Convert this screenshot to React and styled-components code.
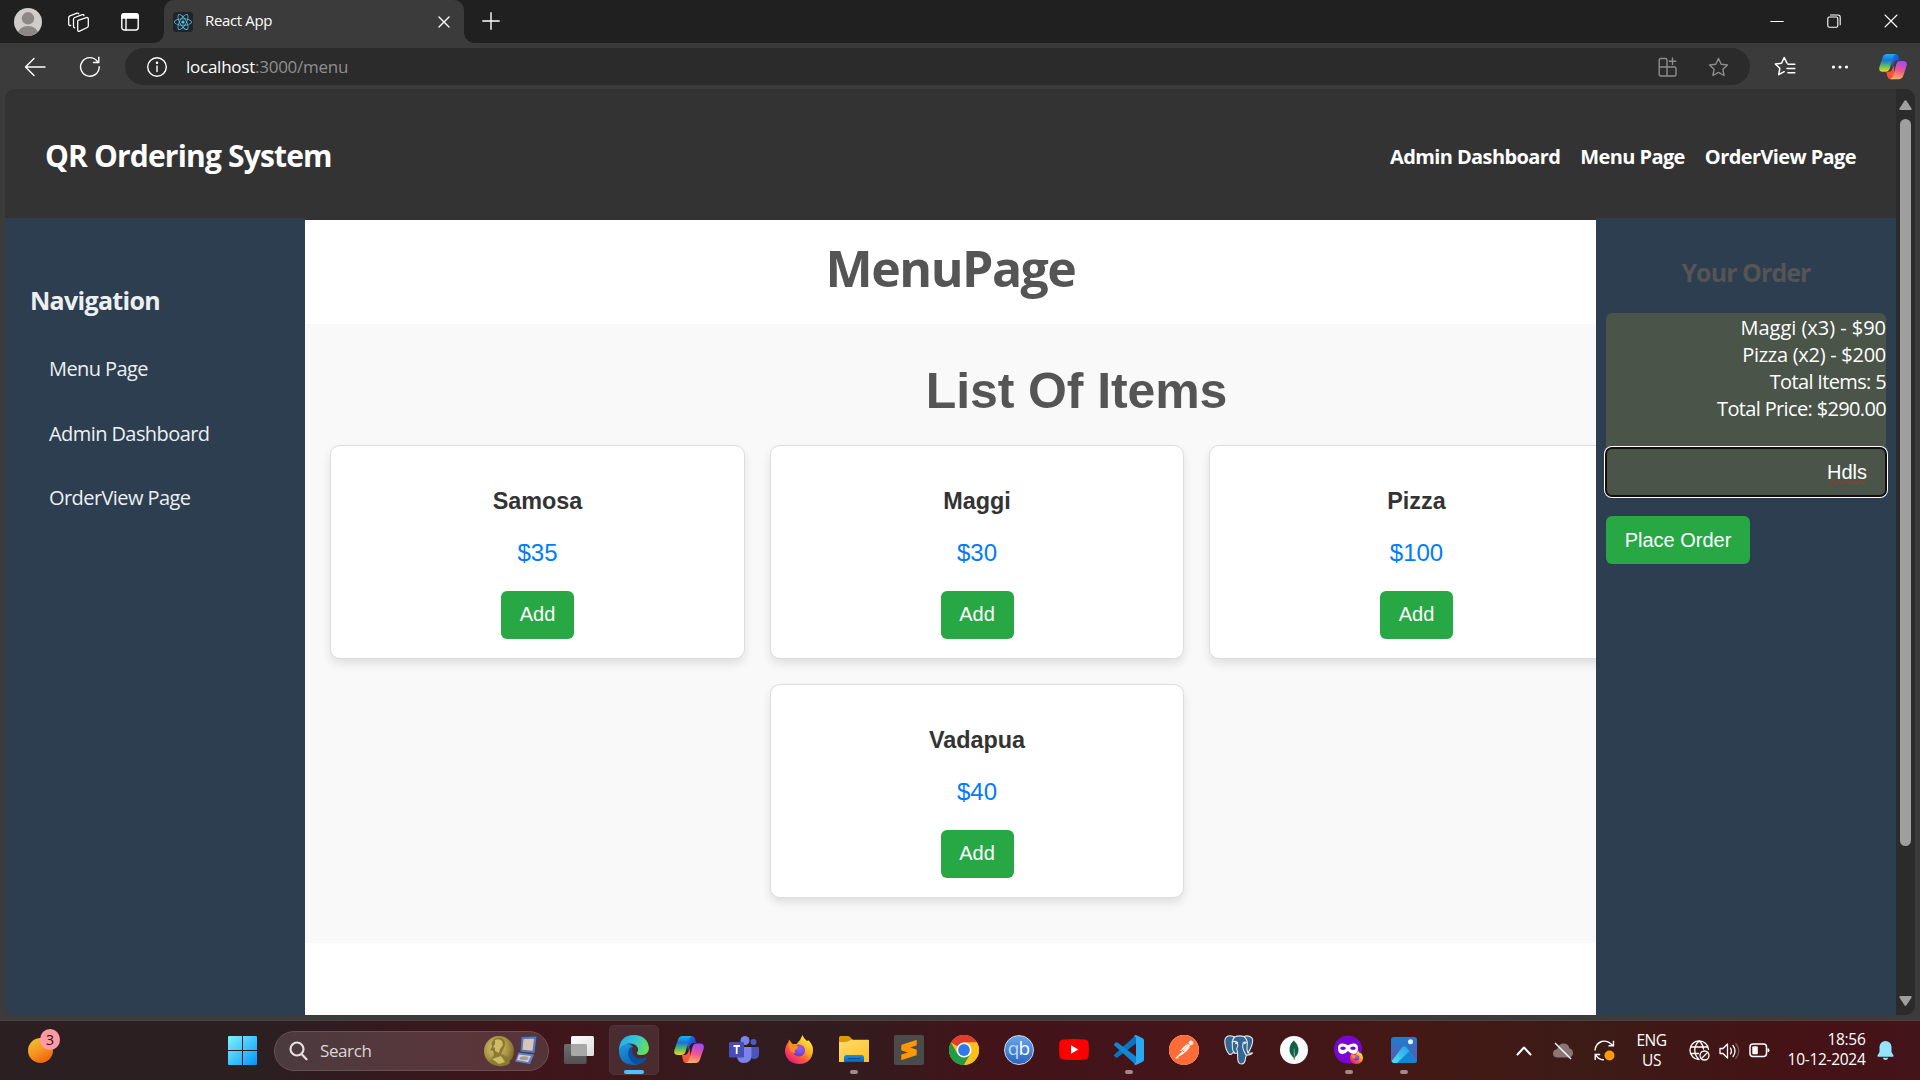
import React from "react";
import styled, { createGlobalStyle, css } from "styled-components";
import { FaReact } from "react-icons/fa";
import { SiMongodb, SiSublimetext, SiPostman } from "react-icons/si";

const SEGOE = '"Open Sans", "Noto Sans", sans-serif';
const ARIAL = '"Liberation Sans", Arial, sans-serif';

const GlobalStyle = createGlobalStyle`
  * { box-sizing: border-box; }
  body { margin: 0; background: #3b3b3b; overflow: hidden; }
  h1, h2, h3, p, ul { margin: 0; padding: 0; }
  svg { display: block; flex: none; }
`;

const Screen = styled.div`
  width: 1920px;
  height: 1080px;
  display: flex;
  flex-direction: column;
  overflow: hidden;
  background: #3b3b3b;
  font-family: ${SEGOE};
`;

/* ---------- Browser chrome ---------- */

const TabStrip = styled.div`
  height: 43px;
  display: flex;
  align-items: center;
  background: #202020;
  color: #fff;
`;

const TabStripTools = styled.div`
  width: 164px;
  display: flex;
  align-items: center;
  justify-content: space-between;
  padding: 0 25px 0 14px;
`;

const corner = css`
  content: "";
  position: absolute;
  bottom: 0;
  width: 10px;
  height: 10px;
`;

const Tab = styled.div`
  position: relative;
  width: 300px;
  height: 43px;
  display: flex;
  align-items: center;
  padding: 0 14px 0 9px;
  background: #3b3b3b;
  border-radius: 10px 10px 0 0;
  &::before {
    ${corner}
    left: -10px;
    background: radial-gradient(circle at 0 0, transparent 9.5px, #3b3b3b 10px);
  }
  &::after {
    ${corner}
    right: -10px;
    background: radial-gradient(circle at 100% 0, transparent 9.5px, #3b3b3b 10px);
  }
`;

const Favicon = styled.span`
  width: 20px;
  height: 20px;
  display: grid;
  place-items: center;
  border-radius: 3px;
  background: #20232a;
  color: #58c4dc;
  font-size: 18px;
`;

const TabTitle = styled.span`
  flex: 1;
  margin-left: 12px;
  padding-bottom: 3px;
  font-size: 15px;
  letter-spacing: -0.35px;
  line-height: 20px;
`;

const NewTab = styled.div`
  flex: 1;
  padding: 0 0 1px 18px;
`;

const WindowButtons = styled.div`
  display: flex;
  gap: 43px;
  padding: 0 22px 1px 0;
`;

const Toolbar = styled.div`
  height: 46px;
  display: flex;
  align-items: center;
  padding: 1px 13px 0 24px;
  background: #3b3b3b;
`;

const NavButtons = styled.div`
  width: 101px;
  display: flex;
  align-items: center;
  gap: 33px;
`;

const AddressBar = styled.div`
  width: 1625px;
  height: 37px;
  display: flex;
  align-items: center;
  padding: 0 21px 0 21px;
  border-radius: 19px;
  background: #2b2b2b;
`;

const Url = styled.span`
  flex: 1;
  margin-left: 18px;
  font-size: 17px;
  line-height: 24px;
  letter-spacing: -0.25px;
  color: #8f8f8f;
  b { font-weight: 400; color: #fff; }
`;

const AddressActions = styled.div`
  display: flex;
  gap: 30px;
`;

const ToolbarActions = styled.div`
  flex: 1;
  display: flex;
  align-items: center;
  padding-left: 24px;
`;

const MenuDots = styled.div`
  flex: 1;
  padding-left: 35px;
`;

/* ---------- Web page ---------- */

const Viewport = styled.div`
  height: 926px;
  margin: 0 5px;
  display: flex;
  overflow: hidden;
  border-radius: 10px;
  background: #333;
`;

const Page = styled.div`
  width: 1891px;
  display: flex;
  flex-direction: column;
`;

const Header = styled.header`
  height: 129px;
  flex: none;
  display: flex;
  align-items: center;
  justify-content: space-between;
  padding: 5px 40px 0 40px;
  background: #333;
  color: #fff;
`;

const Brand = styled.h1`
  font-size: 30px;
  line-height: 40px;
  font-weight: 700;
  letter-spacing: -0.83px;
`;

const HeaderLinks = styled.nav`
  display: flex;
  gap: 20px;
`;

const HeaderLink = styled.a`
  font-size: 20px;
  line-height: 27px;
  font-weight: 700;
  letter-spacing: -0.6px;
  color: #fff;
`;

const Body = styled.div`
  flex: 1;
  min-height: 0;
  display: flex;
`;

const Sidebar = styled.aside`
  width: 300px;
  flex: none;
  padding-top: 65px;
  background: #2c3e50;
  color: #ecf0f1;
`;

const SidebarTitle = styled.h2`
  margin: 0 0 20px 25px;
  font-size: 25px;
  line-height: 34px;
  letter-spacing: -0.7px;
`;

const SidebarLink = styled.a`
  display: block;
  padding-left: 44px;
  font-size: 20px;
  line-height: 64.5px;
  letter-spacing: -0.58px;
`;

const Main = styled.main`
  width: 1291px;
  flex: none;
  overflow: hidden;
  border-top: 2px solid #333;
  background: #fff;
  color: #555;
`;

const PageTitle = styled.h1`
  height: 104px;
  padding-top: 14px;
  text-align: center;
  font-size: 50px;
  line-height: 68px;
  letter-spacing: -1.5px;
`;

const ItemsSection = styled.section`
  width: 1543px;
  height: 619px;
  padding-top: 39px;
  background: #f9f9f9;
  font-family: ${ARIAL};
`;

const ItemsTitle = styled.h2`
  text-align: center;
  font-size: 50px;
  line-height: 57px;
  letter-spacing: -0.1px;
`;

const CardGrid = styled.div`
  width: 1344px;
  margin-top: 25px;
  display: flex;
  flex-wrap: wrap;
  justify-content: center;
  gap: 25px;
`;

const Card = styled.article`
  width: 414.5px;
  height: 214px;
  display: flex;
  flex-direction: column;
  align-items: center;
  padding-top: 42px;
  border: 1px solid #ddd;
  border-radius: 10px;
  background: #fff;
  box-shadow: 0 5px 10px rgba(0, 0, 0, 0.1);
`;

const ItemName = styled.h3`
  font-size: 23.4px;
  line-height: 27px;
  color: #333;
`;

const ItemPrice = styled.p`
  margin: 24px 0 24px;
  font-size: 24px;
  line-height: 28px;
  color: #007bff;
`;

const GreenButton = styled.button`
  width: ${(p) => p.$width}px;
  height: 48px;
  padding: 0 0 ${(p) => p.$lift || 0}px;
  border: 0;
  border-radius: 6px;
  background: #28a745;
  color: #fff;
  font: 20px ${ARIAL};
`;

const OrderPanel = styled.aside`
  flex: 1;
  padding: 37px 10px 0;
  background: #2c3e50;
  color: #fff;
`;

const OrderTitle = styled.h2`
  margin-bottom: 24px;
  text-align: center;
  font-size: 25px;
  line-height: 34px;
  letter-spacing: -0.95px;
  color: #555;
`;

const OrderSummary = styled.div`
  height: 135px;
  padding-top: 1px;
  border-radius: 6px 6px 0 0;
  background: #4a5449;
  text-align: right;
`;

const OrderLine = styled.p`
  font-size: 20px;
  line-height: 27px;
  letter-spacing: ${(p) => p.$tracking}px;
`;

const NameField = styled.div`
  height: 48px;
  margin-bottom: 20px;
  padding-right: 18px;
  border: 1px solid #101010;
  border-radius: 6px;
  box-shadow: 0 0 0 1px #101010, 0 0 0 2px #fff;
  background: #4a5449;
  font: 20px/46px ${ARIAL};
  text-align: right;
  span {
    text-decoration: underline wavy #f01414 1.3px;
    text-underline-offset: 1px;
    text-decoration-skip-ink: none;
  }
`;

const Scrollbar = styled.div`
  width: 19px;
  display: flex;
  flex-direction: column;
  align-items: center;
  justify-content: space-between;
  padding: 11px 1px 9px 0;
  background: #2b2b2b;
`;

const ScrollTrack = styled.div`
  flex: 1;
  margin: 9px 0;
`;

const ScrollThumb = styled.div`
  width: 11px;
  height: 727px;
  border-radius: 6px;
  background: #9f9f9f;
`;

/* ---------- Taskbar ---------- */

const Taskbar = styled.footer`
  height: 60px;
  margin-top: auto;
  display: flex;
  align-items: center;
  border-top: 1px solid #4f4243;
  background: linear-gradient(90deg, #2b1f22 0, #2b1f22 260px, #35191e 400px, #40151b 530px, #3b181c 640px, #311c1f 760px, #331b1e 860px, #42141a 980px, #43151a 1150px, #431815 1420px, #3c1b16 1600px, #451216 1790px, #43141a 1920px);
  color: #fff;
`;

const Widgets = styled.div`
  width: 228px;
  height: 59px;
  padding: 8px 0 0 28px;
`;

const WidgetIcon = styled.div`
  position: relative;
  width: 25px;
  height: 25px;
  margin-top: 9px;
  border-radius: 50%;
  background: linear-gradient(150deg, #f2b731 15%, #f59a22 45%, #f26a11 80%);
`;

const Badge = styled.span`
  position: absolute;
  left: 12px;
  top: -9px;
  width: 20px;
  height: 21px;
  border-radius: 50%;
  background: #ff99a4;
  color: #111;
  font-size: 14px;
  line-height: 21px;
  text-align: center;
`;

const SearchBox = styled.div`
  width: 275px;
  height: 40px;
  margin: 0 2px 0 17px;
  display: flex;
  align-items: center;
  padding: 0 10px 0 14px;
  border: 1px solid #6a5053;
  border-radius: 20px;
  background: linear-gradient(90deg, #4b3b3e, #5a363b 70%, #54333a);
`;

const SearchLabel = styled.span`
  flex: 1;
  margin-left: 12px;
  font-size: 17px;
  line-height: 24px;
  letter-spacing: -0.4px;
  color: #dcd4d5;
`;

const Apps = styled.div`
  display: flex;
  padding-bottom: 2px;
`;

const AppCell = styled.div`
  position: relative;
  width: 50px;
  height: 50px;
  margin: 0 2.5px;
  display: grid;
  place-items: center;
  border-radius: 5px;
  border: 1px solid ${(p) => (p.$active ? "#513439" : "transparent")};
  background: ${(p) => (p.$active ? "#4a2b30" : "transparent")};
  &::after {
    content: "";
    display: ${(p) => (p.$active || p.$running ? "block" : "none")};
    position: absolute;
    bottom: 0;
    left: 50%;
    width: ${(p) => (p.$active ? 20 : 8)}px;
    height: 4px;
    border-radius: 2px;
    transform: translateX(-50%);
    background: ${(p) => (p.$active ? "#4cc2ff" : "#a3898c")};
  }
`;

const RoundIcon = styled.div`
  width: ${(p) => p.$size}px;
  height: ${(p) => p.$size}px;
  display: grid;
  place-items: center;
  border-radius: ${(p) => p.$radius || "50%"};
  background: ${(p) => p.$bg};
  color: ${(p) => p.$color};
  font-size: ${(p) => p.$glyph}px;
`;

const QbIcon = styled.div`
  width: 30px;
  height: 30px;
  border: 1.5px solid #c9dcf4;
  border-radius: 50%;
  background: linear-gradient(#6aa5ea, #2b64bd);
  color: #fff;
  font-size: 19px;
  line-height: 25px;
  letter-spacing: -0.8px;
  text-align: center;
  i { font-style: normal; color: #bcd9fa; }
`;

const Tray = styled.div`
  flex: 1;
  display: flex;
  align-items: center;
  justify-content: flex-end;
  padding-right: 26.5px;
`;

const TrayText = styled.div`
  width: ${(p) => p.$width}px;
  margin: 0 ${(p) => p.$right}px 0 ${(p) => p.$left}px;
  padding-bottom: ${(p) => p.$lift}px;
  font-size: 15.5px;
  line-height: 20px;
  letter-spacing: ${(p) => p.$tracking};
  text-align: ${(p) => p.$align};
  white-space: nowrap;
`;

const TrayIcons = styled.div`
  display: flex;
  align-items: center;
  gap: ${(p) => p.$gap}px;
`;

/* ---------- Icons ---------- */

const Line = ({ w, h, children, color = "#fff", width = 1.4, ...rest }) => (
  <svg width={w} height={h} viewBox={`0 0 ${w} ${h}`} fill="none" stroke={color} strokeWidth={width} strokeLinecap="round" strokeLinejoin="round" {...rest}>
    {children}
  </svg>
);

const Avatar = () => (
  <svg width="28" height="28" viewBox="0 0 28 28">
    <clipPath id="avatarClip"><circle cx="14" cy="14" r="14" /></clipPath>
    <g clipPath="url(#avatarClip)">
      <rect width="28" height="28" fill="#cfccca" />
      <circle cx="14" cy="10.3" r="6.2" fill="#8d8886" />
      <ellipse cx="14" cy="26" rx="10" ry="8" fill="#8d8886" />
    </g>
  </svg>
);

const Workspaces = () => (
  <Line w={22} h={20} width={1.3} transform="translate(-3.5 0)">
    <path d="M10.5 8.3 19 5.6q1.8-.4 1.8 1.2v7q0 1.200-1.100 1.700l-7.600 3.600q-1.900.7-1.900-1.200v-8q0-1.200.3-1.600z" />
    <path d="M7.300 15.800q-1.300 0-1.300-1.600V7.300q0-1.300 1.200-1.800l7.600-2.800q1.400-.4 1.700.8" />
    <path d="M3.200 13.500q-2 .2-2-1.800V5.600q0-1.200 1.200-1.800L9.500 1.200q1.300-.4 1.800.6" />
  </Line>
);

const TabActions = () => (
  <Line w={18} h={18} width={1.4}>
    <rect x=".8" y=".8" width="16.400" height="16.200" rx="2.500" />
    <path d="M.8 5V3Q1 .8 3 .8h12q2 0 2.200 2.200v2z" fill="#fff" />
    <path d="M5 5v12" />
  </Line>
);

const STAR = "m10.500 1.500 2.700 5.700 6.300.8-4.600 4.300 1.200 6.200-5.600-3.100-5.600 3.100 1.200-6.200L1.500 8l6.300-.8z";

const CopilotIcon = ({ size, id }) => (
  <svg width={size} height={size} viewBox="0 0 30 30">
    <defs>
      <linearGradient id={`${id}a`} x1="0" y1="0" x2="0" y2="1">
        <stop offset="0" stopColor="#1fb0f5" /><stop offset=".35" stopColor="#1a74d8" /><stop offset=".65" stopColor="#4fb96a" /><stop offset="1" stopColor="#f4d51c" />
      </linearGradient>
      <linearGradient id={`${id}b`} x1=".5" y1="0" x2=".3" y2="1">
        <stop offset="0" stopColor="#a54bf0" /><stop offset=".5" stopColor="#ef5590" /><stop offset="1" stopColor="#ffb25c" />
      </linearGradient>
      <linearGradient id={`${id}c`} x1="0" y1="0" x2="1" y2="1">
        <stop offset="0" stopColor="#1d87e4" /><stop offset="1" stopColor="#1b2fc0" />
      </linearGradient>
    </defs>
    <path d="M12 1h5.500q2.800 0 3.600 2.800L22 8h-3q-2.400 0-3.200 2.500L14 16z" fill={`url(#${id}c)`} />
    <path d="M16 28h-3.500q-2.700 0-3.500-2.800L7.800 20H11q2.300 0 3-2.400L16 13z" fill="#f4583c" />
    <path d="M8.500 1H18q-2.200.5-3 3.200L11.500 17Q10.500 20 7 20H4Q-.8 20 .4 15L4 4.500Q5.200 1 8.500 1z" fill={`url(#${id}a)`} />
    <path d="M21.500 28H12q2.200-.5 3-3.200L18.500 12Q19.500 8.600 23 8.600h3q4.800 0 3.600 5.100L26 24.500q-1.200 3.500-4.500 3.500z" fill={`url(#${id}b)`} />
  </svg>
);

const WindowsLogo = () => (
  <svg width="29" height="29" viewBox="0 0 29 29">
    <defs>
      <linearGradient id="win" x1="0" y1="0" x2="1" y2="1">
        <stop offset="0" stopColor="#7af4ff" /><stop offset=".5" stopColor="#41c5ff" /><stop offset="1" stopColor="#0492fb" />
      </linearGradient>
    </defs>
    <path fill="url(#win)" d="M1 0h13v14H0V1q0-1 1-1zM15 0h13q1 0 1 1v13H15zM0 15h14v14H1q-1 0-1-1zM15 15h14v13q0 1-1 1H15z" />
  </svg>
);

const SearchHighlight = () => (
  <svg width="54" height="32" viewBox="0 0 54 32">
    <defs>
      <radialGradient id="medal" cx=".4" cy=".4" r=".65">
        <stop offset="0" stopColor="#d9c979" /><stop offset=".6" stopColor="#ab9544" /><stop offset="1" stopColor="#77642a" />
      </radialGradient>
    </defs>
    <circle cx="15" cy="16" r="15" fill="url(#medal)" />
    <path d="M10 4q5-3 9 0 3 3 1.500 7.500L19 15l-2 4 7 3 2 6q-5 4-12 3-5-1-8-5l4-6-1-4-3-1 2-3-.5-4z" fill="#8d7931" />
    <path d="M11 5q4-2 7 1l1 4-3 4-1 4-4-2v-3l-2-1 2-3zM8 24l9-3 4 6-6 2z" fill="#cdbb68" />
    <path d="m37.500 2 15-.5L50.500 18l-14-1.500z" fill="#5477c4" />
    <path d="m39.500 4 10.500-.3-1.500 12-10-1z" fill="#d8c5b8" />
    <path d="m34.500 17.500 15.500 2-4 9.500-15-2.500z" fill="#5d7fcb" />
    <path d="m35 19.500 12 1.500-3 6-11-2z" fill="#dfcfc8" />
    <ellipse cx="40" cy="23.300" rx="4.500" ry="2" fill="#a99a94" />
  </svg>
);

const TaskView = () => (
  <svg width="30" height="28" viewBox="0 0 30 28">
    <defs>
      <linearGradient id="tvw" x1="0" y1="0" x2="1" y2="1"><stop offset="0" stopColor="#fff" /><stop offset="1" stopColor="#dcdcdc" /></linearGradient>
      <linearGradient id="tvg" x1="0" y1="0" x2="0" y2="1"><stop offset="0" stopColor="#6e6e6e" /><stop offset="1" stopColor="#505050" /></linearGradient>
    </defs>
    <rect x="7" y="0" width="23" height="20" rx="1.500" fill="url(#tvw)" />
    <rect x="0" y="8" width="22.500" height="20" rx="1.500" fill="url(#tvg)" />
    <path d="M7 8h15.500v12H8.500Q7 20 7 18.500z" fill="#a8a8a8" />
  </svg>
);

const EdgeIcon = () => (
  <svg width="30" height="30" viewBox="0 0 30 30">
    <defs>
      <linearGradient id="ed1" x1="0" y1=".3" x2="1" y2=".6"><stop offset="0" stopColor="#2aa9e8" /><stop offset=".5" stopColor="#35c7d0" /><stop offset="1" stopColor="#6be04e" /></linearGradient>
      <linearGradient id="ed2" x1="0" y1="0" x2=".6" y2="1"><stop offset="0" stopColor="#1f9be2" /><stop offset="1" stopColor="#0b63b5" /></linearGradient>
    </defs>
    <path d="M0 15Q0 30 15 30q8 0 12.500-6.500.5-1.300-1-.8Q15 27 12 17q-.5-3 2-5.500Q9 6.500 3.500 9.500 0 12 0 15z" fill="url(#ed2)" />
    <path d="M13.700 11.300Q8 14 9.500 21q2 7 9 8.600 6-1.300 9.200-6.400.3-1.100-1-.5Q20 25.500 15 21q-3.500-4-1.300-9.700z" fill="#0d4fa0" />
    <path d="M0 14.500Q1 0 15 0q13.500.5 15 13-.3 6.500-7 7-5 .2-5-2 .3-.8 1-2.200 1-4.300-4.500-6.800Q5 7 0 14.500z" fill="url(#ed1)" />
  </svg>
);

const TeamsIcon = () => (
  <svg width="30" height="28" viewBox="0 0 30 28">
    <circle cx="24.500" cy="6" r="3" fill="#5059c9" />
    <path d="M21 11h8q1 0 1 1v6q-.3 5-5 5-3 0-4-2z" fill="#4b53bc" />
    <circle cx="16" cy="4.500" r="4.500" fill="#7b83eb" />
    <path d="M9 11h12.500q1 0 1 1v8q-.5 7-7.500 7-6 0-7-6z" fill="#7b83eb" />
    <rect x="0" y="6" width="15" height="15.500" rx="1.200" fill="#464eb8" />
    <path d="M4.500 10h6.500M7.700 10v8" stroke="#fff" strokeWidth="1.800" fill="none" />
  </svg>
);

const FirefoxIcon = ({ size, id }) => (
  <svg width={size} height={size} viewBox="0 0 30 30">
    <defs>
      <linearGradient id={`${id}f`} x1=".85" y1=".1" x2=".2" y2=".95"><stop offset="0" stopColor="#fff04d" /><stop offset=".35" stopColor="#ffb41f" /><stop offset=".65" stopColor="#ff5b3c" /><stop offset="1" stopColor="#e91683" /></linearGradient>
      <radialGradient id={`${id}p`} cx=".6" cy=".3" r=".7"><stop offset="0" stopColor="#a65af5" /><stop offset="1" stopColor="#5b3fd0" /></radialGradient>
    </defs>
    <path d="M18.500 0q1 3.500 4.500 6l1.500-.8q5 5 4.500 11Q27.500 28.500 15.500 29 2.500 28.500 1 16.500 1 11 4.500 7L5 4.500 8.500 9h4q4-3.500 6-9z" fill={`url(#${id}f)`} />
    <circle cx="15" cy="15.500" r="6" fill={`url(#${id}p)`} />
    <path d="M4.500 9q4.500-.8 6.800 1.200l3 1.300q-.4 2.500-3 3.300-1.300 1.200.4 3.200Q6 18 5 13z" fill="#ff8a2a" />
  </svg>
);

const FolderIcon = () => (
  <svg width="30" height="27" viewBox="0 0 30 27">
    <defs>
      <linearGradient id="fold" x1="0" y1="0" x2="1" y2="1"><stop offset="0" stopColor="#ffdc6b" /><stop offset="1" stopColor="#fbc02d" /></linearGradient>
      <linearGradient id="foldb" x1="0" y1="0" x2="0" y2="1"><stop offset="0" stopColor="#1c8fe0" /><stop offset="1" stopColor="#0a63b8" /></linearGradient>
    </defs>
    <path d="M0 1.500Q0 0 1.500 0H9q1 0 2 1l2.500 2.500V9H0z" fill="#dd9a07" />
    <path d="M0 6q6 0 8.500-.2l3.500-2H29q1 0 1 1V26H0z" fill="url(#fold)" />
    <path d="M5 26v-4.500Q5 19 7.500 19h15q2.500 0 2.500 2.500V26z" fill="url(#foldb)" />
    <path d="M9 22.500h12.500" stroke="#084c94" strokeWidth="1" />
  </svg>
);

const ChromeIcon = () => (
  <svg width="30" height="30" viewBox="0 0 30 30">
    <circle cx="15" cy="15" r="15" fill="#fbc116" />
    <path d="M15 15 2 7.500A15 15 0 0 1 28 7.500H15z" fill="#e33b2e" />
    <path d="M2 7.500 8.500 18.800 15 22.500 21.500 18.800 15 30A15 15 0 0 1 2 7.500z" fill="#229a48" />
    <path d="M15 7.500h13A15 15 0 0 1 15 30l6.500-11.200z" fill="#fbc116" />
    <circle cx="15" cy="15" r="7.500" fill="#fff" />
    <circle cx="15" cy="15" r="5.900" fill="#3079ea" />
  </svg>
);

const YoutubeIcon = () => (
  <svg width="30" height="21" viewBox="0 0 30 21">
    <path d="M4 .6Q15-.4 26 .6q3 .2 3.500 3.200.8 6.700 0 13.400-.5 3-3.500 3.200-11 1-22 0-3-.2-3.500-3.200-.8-6.700 0-13.400Q1 .8 4 .6z" fill="#f00" />
    <path d="m12 6.200 7.300 4.300-7.300 4.300z" fill="#fff" />
  </svg>
);

const VsCodeIcon = () => (
  <svg width="30" height="30" viewBox="0 0 30 30">
    <path d="M22 0v8.500L3.500 22.500q-1 .6-1.800 0L.4 21.300q-.8-.8 0-1.700z" fill="#0a74bd" />
    <path d="M22 30v-8.500L3.500 7.500q-1-.6-1.800 0L.4 8.700q-.8.800 0 1.700z" fill="#1187d2" />
    <path d="m22 0 6.700 3.200Q30 4 30 5.200v19.600q0 1.200-1.300 2L22 30q-1.200 0-2-1l2-1.500V2.500L20 1q.9-1 2-1z" fill="#29a9f2" />
  </svg>
);

const PostgresIcon = () => (
  <svg width="30" height="30" viewBox="0 0 30 30" fill="#336791" stroke="#dfe6ec" strokeWidth="1.100" strokeLinejoin="round" strokeLinecap="round">
    <path d="M20 1.500q4.500-1.700 8 1.500 1.500 2-.3 7.500-1.500 4.500-3.700 7.300 2 .8 4.500.1-1.500 2.300-6 2.200l-1 3q-.4 5.900-4 5.900-3.300-.2-3.700-4.500l-.3-6.500q-3 .8-4.500-.5-2 3-4 1.500Q1 14 .8 6.500 1 1 5.500.8q2.800 0 5 1.200 4.500-2 9.500-.5z" />
    <path d="M10.500 2Q8 4.500 8.300 9l.2 5q0 2.500 2 3.500M20 1.500q3.500 3 3.300 7.500-.3 3-.3 5.500l1 3.300M13.500 18q.5-2-1-4 2-3 1-6.500-2-2-5.500-.5M23 7.500q-3-1-4 .5-1 4 .7 7.500.8 2 2.300 4.500" fill="none" />
    <circle cx="12" cy="8.300" r=".5" fill="#fff" />
    <circle cx="20.800" cy="8.300" r=".5" fill="#fff" />
  </svg>
);

const PhotosIcon = () => (
  <svg width="26" height="26" viewBox="0 0 26 26">
    <defs>
      <linearGradient id="ph1" x1="0" y1="0" x2="0" y2="1"><stop offset="0" stopColor="#1b7fd0" /><stop offset="1" stopColor="#6653a8" /></linearGradient>
      <linearGradient id="ph2" x1="0" y1="1" x2="1" y2="0"><stop offset="0" stopColor="#58dcfb" /><stop offset="1" stopColor="#1ea5e8" /></linearGradient>
    </defs>
    <rect width="26" height="26" rx="3" fill="url(#ph1)" />
    <path d="M1 23.500 11.500 10q1.700-1.700 3.400 0L26 22.500V23q0 3-3 3H3q-1.500 0-2-2.500z" fill="#1683d4" />
    <path d="M.8 24 11.300 10.200q1.900-1.900 3.800 0l3.400 3.800L6 26H3q-1.600 0-2.200-2z" fill="url(#ph2)" />
    <circle cx="19.500" cy="4.700" r="2.500" fill="#e9f2ff" />
  </svg>
);

const MaskIcon = () => (
  <svg width="30" height="30" viewBox="0 0 30 30">
    <circle cx="14" cy="14.500" r="14" fill="#7a06d4" />
    <path d="M4 13q0-4.500 4.500-4.500 2.500 0 5.500 1.800 3-1.800 5.500-1.800Q24 8.500 24 13q0 6-4.500 6-3 0-5.500-3-2.500 3-5.500 3Q4 19 4 13z" fill="#fff" />
    <ellipse cx="9" cy="13.300" rx="2.800" ry="1.800" fill="#7a06d4" />
    <ellipse cx="19" cy="13.300" rx="2.800" ry="1.800" fill="#7a06d4" />
    <g transform="translate(15.500 15.500)"><FirefoxIcon size={14} id="mini" /></g>
  </svg>
);

/* ---------- Data ---------- */

const items = [
  { name: "Samosa", price: 35 },
  { name: "Maggi", price: 30 },
  { name: "Pizza", price: 100 },
  { name: "Vadapua", price: 40 },
];

const orderLines = [
  { text: "Maggi (x3) - $90", tracking: -0.03 },
  { text: "Pizza (x2) - $200", tracking: -0.27 },
  { text: "Total Items: 5", tracking: -0.65 },
  { text: "Total Price: $290.00", tracking: -0.65 },
];

const taskbarApps = [
  { id: "taskview", icon: <TaskView /> },
  { id: "edge", icon: <EdgeIcon />, active: true },
  { id: "copilot", icon: <CopilotIcon size={30} id="cpt" /> },
  { id: "teams", icon: <TeamsIcon /> },
  { id: "firefox", icon: <FirefoxIcon size={30} id="ffx" /> },
  { id: "files", icon: <FolderIcon />, running: true },
  { id: "sublime", icon: <RoundIcon $size={30} $radius="2px" $bg="#4b4b4b" $color="#ff9800" $glyph={20}><SiSublimetext /></RoundIcon> },
  { id: "chrome", icon: <ChromeIcon /> },
  { id: "qb", icon: <QbIcon><i>q</i>b</QbIcon> },
  { id: "youtube", icon: <YoutubeIcon /> },
  { id: "vscode", icon: <VsCodeIcon />, running: true },
  { id: "postman", icon: <RoundIcon $size={30} $bg="#fff" $color="#ff6c37" $glyph={30}><SiPostman /></RoundIcon> },
  { id: "postgres", icon: <PostgresIcon /> },
  { id: "mongo", icon: <RoundIcon $size={28} $bg="#f9fbfa" $color="#116149" $glyph={20}><SiMongodb /></RoundIcon> },
  { id: "private", icon: <MaskIcon />, running: true },
  { id: "photos", icon: <PhotosIcon />, running: true },
];

export default function App() {
  return (
    <Screen>
      <GlobalStyle />
      <TabStrip>
        <TabStripTools>
          <Avatar />
          <Workspaces />
          <TabActions />
        </TabStripTools>
        <Tab>
          <Favicon><FaReact /></Favicon>
          <TabTitle>React App</TabTitle>
          <Line w={12} h={12}><path d="m1 1 10 10M11 1 1 11" /></Line>
        </Tab>
        <NewTab><Line w={18} h={18}><path d="M9 .8v16.400M.8 9h16.400" /></Line></NewTab>
        <WindowButtons>
          <Line w={14} h={14} width={1.1}><path d="M.8 7.500h12.400" /></Line>
          <Line w={14} h={14} width={1.1}><rect x=".8" y="3" width="10" height="10.200" rx="1.500" /><path d="M3.500 1h7.500q2.200 0 2.200 2.200v7.500" /></Line>
          <Line w={14} h={14} width={1.1}><path d="m1 1 12 12M13 1 1 13" /></Line>
        </WindowButtons>
      </TabStrip>

      <Toolbar>
        <NavButtons>
          <Line w={22} h={20}><path d="M21 10H2M10 1.500 1.500 10l8.500 8.500" /></Line>
          <Line w={22} h={22}><path d="M20.200 10.800A9.300 9.300 0 1 1 18.200 5.200M19.800 1.200v5.300h-5.300" /></Line>
        </NavButtons>
        <AddressBar>
          <Line w={22} h={22}><circle cx="11" cy="11" r="9.300" /><path d="M11 10v5.500" /><circle cx="11" cy="6.800" r=".6" fill="#fff" /></Line>
          <Url><b>localhost</b>:3000/menu</Url>
          <AddressActions>
            <Line w={20} h={20} color="#8d8d8d">
              <path d="M9 10H1.200V3Q1.200 1.500 2.700 1.500H7.500Q9 1.500 9 3v16H2.700Q1.200 19 1.200 17.500V10M9 10h7.500q1.500 0 1.500 1.500v6q0 1.500-1.500 1.500H9M14.500 1v6.500M11.300 4.200h6.500" />
            </Line>
            <Line w={21} h={20} color="#8d8d8d"><path d={STAR} /></Line>
          </AddressActions>
        </AddressBar>
        <ToolbarActions>
          <Line w={22} h={21} width={1.500}>
            <path d="M13 7.200 10.200 1.500 7.500 7.200l-6.200.8 4.500 4.300-1.100 6.400 5.500-3M14 8.200h6.800M13 12.500h7.800M14 16.800h6.800" />
          </Line>
          <MenuDots>
            <svg width="18" height="6" viewBox="0 0 18 6" fill="#fff"><circle cx="2.500" cy="3" r="1.600" /><circle cx="9" cy="3" r="1.600" /><circle cx="15.500" cy="3" r="1.600" /></svg>
          </MenuDots>
          <CopilotIcon size={28} id="cpb" />
        </ToolbarActions>
      </Toolbar>

      <Viewport>
        <Page>
          <Header>
            <Brand>QR Ordering System</Brand>
            <HeaderLinks>
              <HeaderLink>Admin Dashboard</HeaderLink>
              <HeaderLink>Menu Page</HeaderLink>
              <HeaderLink>OrderView Page</HeaderLink>
            </HeaderLinks>
          </Header>
          <Body>
            <Sidebar>
              <SidebarTitle>Navigation</SidebarTitle>
              <SidebarLink>Menu Page</SidebarLink>
              <SidebarLink>Admin Dashboard</SidebarLink>
              <SidebarLink>OrderView Page</SidebarLink>
            </Sidebar>
            <Main>
              <PageTitle>MenuPage</PageTitle>
              <ItemsSection>
                <ItemsTitle>List Of Items</ItemsTitle>
                <CardGrid>
                  {items.map((item) => (
                    <Card key={item.name}>
                      <ItemName>{item.name}</ItemName>
                      <ItemPrice>${item.price}</ItemPrice>
                      <GreenButton $width={73} $lift={2}>Add</GreenButton>
                    </Card>
                  ))}
                </CardGrid>
              </ItemsSection>
            </Main>
            <OrderPanel>
              <OrderTitle>Your Order</OrderTitle>
              <OrderSummary>
                {orderLines.map((line) => <OrderLine key={line.text} $tracking={line.tracking}>{line.text}</OrderLine>)}
              </OrderSummary>
              <NameField><span>Hdls</span></NameField>
              <GreenButton $width={144}>Place Order</GreenButton>
            </OrderPanel>
          </Body>
        </Page>
        <Scrollbar>
          <svg width="13" height="10" viewBox="0 0 13 10"><path d="M5.500.8q1-1.200 2 0l5 7.700q.5 1.500-1 1.500h-10Q0 10 .5 8.500z" fill="#9f9f9f" /></svg>
          <ScrollTrack><ScrollThumb /></ScrollTrack>
          <svg width="13" height="10" viewBox="0 0 13 10"><path d="M5.500 9.200q1 1.200 2 0l5-7.700Q13 0 11.500 0h-10Q0 0 .5 1.500z" fill="#9f9f9f" /></svg>
        </Scrollbar>
      </Viewport>

      <Taskbar>
        <Widgets>
          <WidgetIcon><Badge>3</Badge></WidgetIcon>
        </Widgets>
        <WindowsLogo />
        <SearchBox>
          <Line w={19} h={20} width={2.200} color="#e4dfe0"><circle cx="8" cy="8" r="6.500" /><path d="m13 13.500 4.500 4.800" /></Line>
          <SearchLabel>Search</SearchLabel>
          <SearchHighlight />
        </SearchBox>
        <Apps>
          {taskbarApps.map((app) => (
            <AppCell key={app.id} $active={app.active} $running={app.running}>{app.icon}</AppCell>
          ))}
        </Apps>
        <Tray>
          <TrayIcons $gap={20}>
            <Line w={16} h={10} width={2}><path d="m1.500 8.500 6.500-7 6.500 7" /></Line>
            <svg width="22" height="18" viewBox="0 0 22 18">
              <path d="M5.500 15.500Q1 15.500 1 11.500q0-3.700 4-4.200Q6.500 1.500 11.500 1.500q5 0 6 5 3.500.5 3.500 4.500t-4.500 4.500z" fill="#8d7473" />
              <path d="m3 1 16 16" stroke="#fff" strokeWidth="1.500" />
            </svg>
            <svg width="21" height="21" viewBox="0 0 21 21" fill="none" stroke="#fff" strokeWidth="1.400">
              <path d="M1 10.500Q1.300 4 7.500 1.500q6-1.500 11 3.700M19.500 .8v5h-5M10 19.800q-5 0-8.500-5M1.200 20v-5.500h5" />
              <circle cx="15.500" cy="15.500" r="5" fill="#ff9a0a" stroke="none" />
            </svg>
          </TrayIcons>
          <TrayText $width={40} $left={17} $right={17} $lift={2} $align="center" $tracking="-0.5px">ENG<br />US</TrayText>
          <TrayIcons $gap={9}>
            <Line w={21} h={21} width={1.300}>
              <path d="M10 19.500A9.300 9.300 0 1 1 19.500 9.500M1.500 7h17M1.500 13.500h8M10 1Q5.500 5.500 5.800 10.500 6 16 10 19.500M10.500 1q3.800 4 4 8" />
              <circle cx="15.500" cy="15.500" r="4.500" /><path d="m12.500 18.500 6-6" />
            </Line>
            <Line w={21} h={20} width={1.300}>
              <path d="M1 7.500h3l4.500-4.500v14L4 12.500H1zM11.500 7q2 3 0 6M14 4.500q4 5.500 0 11" />
              <path d="M16.800 2.500q6 7.500 0 15" stroke="#7d5754" />
            </Line>
            <svg width="21" height="15" viewBox="0 0 21 15">
              <rect x="1" y="1" width="16.500" height="12.600" rx="3" fill="none" stroke="#fff" strokeWidth="1.500" />
              <rect x="3.300" y="3.300" width="5.500" height="8" rx="1" fill="#fff" />
              <path d="M18.500 5q2 .3 2 2.300t-2 2.300z" fill="#fff" />
            </svg>
          </TrayIcons>
          <TrayText $width={80} $left={16} $right={11} $lift={3} $align="right" $tracking="-0.3px">18:56<br />10-12-2024</TrayText>
          <svg width="17" height="19" viewBox="0 0 17 19">
            <path d="M8.500 0Q14 .5 14.500 6v5l2 3.500q.5 1.300-.8 1.300H1.300Q0 15.800.5 14.500l2-3.500V6Q3 .5 8.500 0zM5.800 16.800h5.400q-.5 2.200-2.700 2.200t-2.700-2.200z" fill="#93e4ff" />
          </svg>
        </Tray>
      </Taskbar>
    </Screen>
  );
}
